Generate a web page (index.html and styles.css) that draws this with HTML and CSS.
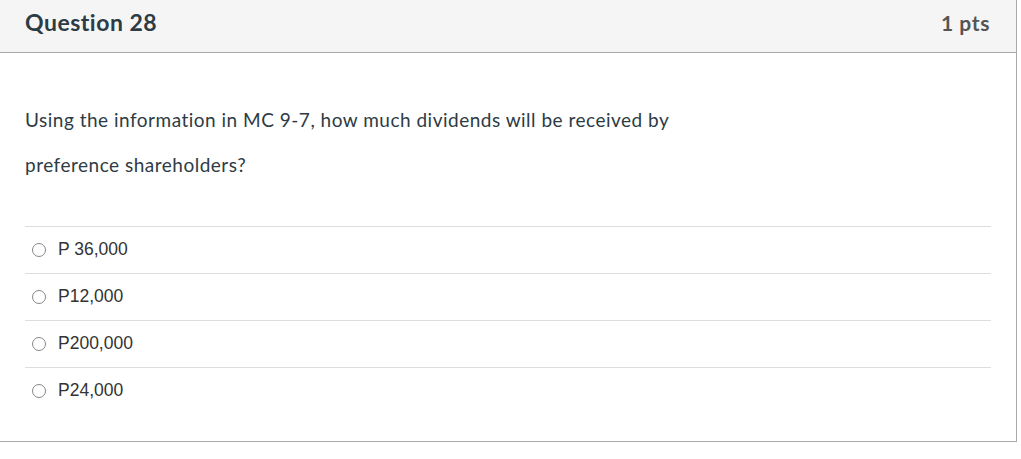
FILE: index.html
```html
<!DOCTYPE html>
<html>
<head>
<meta charset="utf-8">
<link rel="stylesheet" href="styles.css">
</head>
<body>
<div class="question">
  <div class="q-header">
    <h2 class="q-title">Question 28</h2>
    <span class="q-pts">1 pts</span>
  </div>
  <div class="q-body">
    <p class="q-text">Using the information in MC 9-7, how much dividends will be received by<br>preference shareholders?</p>
    <div class="answers">
      <label class="answer"><span class="radio"></span><span class="answer-text">P 36,000</span></label>
      <label class="answer"><span class="radio"></span><span class="answer-text">P12,000</span></label>
      <label class="answer"><span class="radio"></span><span class="answer-text">P200,000</span></label>
      <label class="answer"><span class="radio"></span><span class="answer-text">P24,000</span></label>
    </div>
  </div>
</div>
</body>
</html>
```

FILE: styles.css
```css
html, body {
  margin: 0;
  padding: 0;
  background: #fff;
}
.question {
  width: 1016px;
  border-right: 1px solid #aaa;
  border-bottom: 1px solid #aaa;
  font-family: Lato, "Noto Sans", sans-serif;
  color: #2d3b45;
}
.q-header {
  background: #f5f5f5;
  border-bottom: 1px solid #aaa;
  display: flex;
  align-items: center;
  justify-content: space-between;
  padding: 0 26px 0 25px;
  box-sizing: border-box;
  height: 53px;
}
.q-title {
  margin: 0;
  font-size: 23px;
  font-weight: 700;
  letter-spacing: 0.5px;
  color: #2d3b45;
  position: relative;
  top: -4px;
}
.q-pts {
  font-size: 21px;
  font-weight: 700;
  letter-spacing: 0.6px;
  color: #555;
  position: relative;
  top: -4px;
}
.q-body {
  padding: 44px 25px 27px 25px;
}
.q-text {
  margin: 0;
  font-size: 19px;
  letter-spacing: 0.5px;
  line-height: 45px;
  color: #2d3b45;
}
.answers {
  margin-top: 39px;
}
.answer {
  display: flex;
  align-items: center;
  height: 46px;
  border-top: 1px solid #ddd;
  padding-left: 7px;
}
.radio {
  width: 14px;
  height: 14px;
  border: 1px solid #888;
  border-radius: 50%;
  box-sizing: border-box;
  background: #fff;
  margin-right: 12px;
}
.answer-text {
  font-family: "Liberation Sans", Arial, sans-serif;
  font-size: 17.5px;
  color: #333;
  position: relative;
  top: -1px;
}
```
